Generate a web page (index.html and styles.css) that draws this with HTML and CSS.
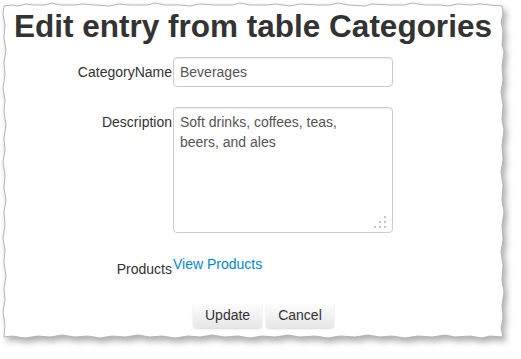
FILE: index.html
```html
<!DOCTYPE html>
<html>
<head>
<meta charset="utf-8">
<title>Edit entry from table Categories</title>
<link rel="stylesheet" href="styles.css">
</head>
<body>
<div class="page">
  <svg class="paper-bg" width="521" height="359" viewBox="0 0 521 359" aria-hidden="true">
    <path class="paper-edge" d="M4,6 L12,5 L18,6 L26,4 L33,5 L45,5 L52,3 L60,5 L75,5 L82,4 L95,5 L110,6 L118,4 L130,5 L148,5 L155,3 L165,5 L180,5 L190,6 L200,4 L215,5 L232,5 L240,3 L250,5 L268,5 L275,4 L290,6 L300,4 L318,5 L330,5 L338,3 L348,5 L365,6 L372,4 L390,5 L405,5 L412,3 L425,5 L440,5 L448,6 L458,4 L470,5 L480,4 L490,5 L502,6 L503,14 L501,22 L503,30 L502,45 L504,52 L502,66 L503,80 L501,92 L503,105 L502,120 L504,130 L502,145 L503,160 L501,172 L503,185 L502,200 L504,212 L502,225 L503,240 L501,252 L503,265 L502,280 L504,292 L502,305 L503,318 L501,328 L503,337 L490,336 L482,338 L470,336 L455,337 L445,335 L432,337 L418,336 L405,338 L392,336 L380,337 L368,335 L355,337 L340,336 L328,338 L315,336 L300,337 L288,335 L275,337 L262,336 L250,338 L238,336 L225,337 L212,335 L200,337 L188,336 L175,338 L162,336 L150,337 L138,335 L125,337 L112,336 L100,338 L88,336 L75,337 L62,335 L50,337 L38,336 L25,338 L12,336 L4,337 L5,325 L3,312 L5,300 L4,288 L6,276 L4,262 L5,250 L3,238 L5,225 L4,212 L6,200 L4,188 L5,175 L3,162 L5,150 L4,138 L6,125 L4,112 L5,100 L3,88 L5,75 L4,62 L6,50 L4,38 L5,25 L3,14 Z"/>
  </svg>
  <div class="content">
    <h1 class="title">Edit entry from table Categories</h1>
    <form class="form">
      <div class="row row-name">
        <label class="label" for="cat">CategoryName</label>
        <input class="field" id="cat" type="text" value="Beverages">
      </div>
      <div class="row row-desc">
        <label class="label" for="desc">Description</label>
        <div class="area-wrap">
          <textarea class="field area" id="desc">Soft drinks, coffees, teas, beers, and ales</textarea>
          <svg class="grip" width="12" height="12" viewBox="0 0 12 12" aria-hidden="true">
            <rect x="10" y="0" width="2" height="2"/>
            <rect x="5" y="5" width="2" height="2"/>
            <rect x="10" y="5" width="2" height="2"/>
            <rect x="0" y="10" width="2" height="2"/>
            <rect x="5" y="10" width="2" height="2"/>
            <rect x="10" y="10" width="2" height="2"/>
          </svg>
        </div>
      </div>
      <div class="row row-products">
        <span class="label">Products</span>
        <a class="link" href="#">View Products</a>
      </div>
      <div class="actions">
        <button class="btn" type="button">Update</button>
        <button class="btn" type="button">Cancel</button>
      </div>
    </form>
  </div>
</div>
</body>
</html>
```
FILE: styles.css
```css
html, body {
  margin: 0;
  padding: 0;
  background: #ffffff;
}

body {
  font-family: "Liberation Sans", Arial, sans-serif;
  font-size: 14px;
  line-height: 20px;
  color: #333333;
}

.page {
  position: relative;
  width: 521px;
  height: 359px;
  overflow: hidden;
}

.paper-bg {
  position: absolute;
  left: 0;
  top: 0;
  filter: drop-shadow(3px 4px 3px rgba(0, 0, 0, 0.32));
}

.paper-edge {
  fill: #ffffff;
  stroke: #b4b4b4;
  stroke-width: 1;
}

.content {
  position: relative;
  width: 498px;
  margin-left: 4px;
  padding-top: 6px;
}

.title {
  margin: 0;
  text-align: center;
  font-size: 31.5px;
  line-height: 40px;
  font-weight: bold;
  color: #333333;
}

.form {
  margin: 11px 0 0 -4px;
}

.row {
  display: flex;
  align-items: flex-start;
}

.row-name {
  margin-bottom: 20px;
}

.row-desc {
  margin-bottom: 21px;
}

.row-products {
  margin-bottom: 23px;
}

.label {
  width: 172px;
  margin-right: 1px;
  padding-top: 5px;
  text-align: right;
  color: #333333;
}

.field {
  box-sizing: border-box;
  width: 220px;
  height: 30px;
  margin: 0;
  padding: 4px 6px;
  border: 1px solid #cccccc;
  border-radius: 4px;
  font-family: "Liberation Sans", Arial, sans-serif;
  font-size: 14px;
  line-height: 20px;
  color: #555555;
  background: #ffffff;
  box-shadow: inset 0 1px 1px rgba(0, 0, 0, 0.075);
  outline: none;
}

.area-wrap {
  position: relative;
  width: 220px;
  height: 126px;
}

.area {
  display: block;
  height: 126px;
  padding-right: 24px;
  resize: none;
  overflow: hidden;
}

.grip {
  position: absolute;
  right: 7px;
  bottom: 5px;
  fill: #c4c4c4;
}

.link {
  color: #0088cc;
  text-decoration: none;
}

.actions {
  display: flex;
  gap: 4px;
  padding-left: 193px;
}

.btn {
  height: 26px;
  margin: 0;
  padding: 3px 12px;
  border: none;
  border-radius: 4px;
  font-family: "Liberation Sans", Arial, sans-serif;
  font-size: 14px;
  line-height: 20px;
  color: #333333;
  background: linear-gradient(#ffffff, #e6e6e6);
  box-shadow: 0 1px 2px rgba(0, 0, 0, 0.15);
}
```
